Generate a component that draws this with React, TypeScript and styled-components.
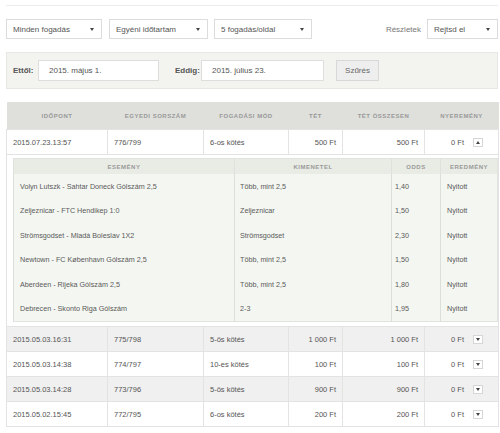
import styled, { createGlobalStyle } from "styled-components";

const GlobalStyle = createGlobalStyle`
  html, body {
    margin: 0;
    padding: 0;
    background: #ffffff;
  }
  body, table, button {
    font-family: "Liberation Sans", Arial, sans-serif;
    font-size: 8px;
    color: #555;
  }
`;

const Page = styled.div`
  width: 500px;
  padding: 0 2px 0 6px;
  box-sizing: border-box;
`;

const TopRule = styled.div`
  height: 5px;
  border-bottom: 1px solid #ececec;
`;

const SelectRow = styled.div`
  display: flex;
  align-items: center;
  margin-top: 13px;
  height: 20px;
`;

const Select = styled.div<{ $w: number; $gap?: number }>`
  width: ${(p) => p.$w}px;
  margin-right: ${(p) => p.$gap ?? 0}px;
  height: 20px;
  box-sizing: border-box;
  border: 1px solid #dcdcdc;
  background: #fff;
  display: flex;
  align-items: center;
  justify-content: space-between;
  padding: 0 7px 0 6px;
  color: #555;
`;

const Caret = styled.span<{ $up?: boolean }>`
  width: 0;
  height: 0;
  border-left: 2.5px solid transparent;
  border-right: 2.5px solid transparent;
  ${(p) =>
    p.$up ? "border-bottom: 3px solid #444;" : "border-top: 3px solid #444;"}
`;

const Spacer = styled.div`
  flex: 1;
`;

const Label = styled.span`
  color: #777;
  margin-right: 6px;
`;

const FilterPanel = styled.div`
  margin-top: 13px;
  height: 37px;
  box-sizing: border-box;
  background: #f3f4f0;
  border: 1px solid #e7e8e4;
  display: flex;
  align-items: center;
  padding-left: 6px;
`;

const FilterLabel = styled.span<{ $w: number }>`
  width: ${(p) => p.$w}px;
  font-weight: bold;
  color: #555;
`;

const DateInput = styled.div<{ $w: number; $gap: number }>`
  width: ${(p) => p.$w}px;
  margin-right: ${(p) => p.$gap}px;
  height: 21px;
  box-sizing: border-box;
  border: 1px solid #dedede;
  background: #fff;
  display: flex;
  align-items: center;
  padding-left: 10px;
  color: #555;
`;

const FilterButton = styled.button`
  width: 43px;
  height: 21px;
  box-sizing: border-box;
  border: 1px solid #d8d8d8;
  background: #eeeeee;
  color: #666;
  padding: 0;
`;

const Table = styled.table`
  margin-top: 13px;
  width: 492px;
  border-collapse: collapse;
  table-layout: fixed;
  font-size: 7.5px;
`;

const HeadCell = styled.th<{ $w: number }>`
  width: ${(p) => p.$w}px;
  height: 27px;
  background: #dfe0dc;
  color: #999;
  font-size: 6px;
  font-weight: bold;
  letter-spacing: 0.5px;
  text-align: center;
  padding: 0;
`;

const Row = styled.tr<{ $shade?: boolean }>`
  background: ${(p) => (p.$shade ? "#f0f0f0" : "#ffffff")};
`;

const Cell = styled.td<{ $right?: boolean; $pr?: number }>`
  height: 24px;
  border: 1px solid #e3e3e3;
  padding: 0 ${(p) => p.$pr ?? 6}px 0 6px;
  text-align: ${(p) => (p.$right ? "right" : "left")};
  color: #555;
  white-space: nowrap;
`;

const WinCell = styled.div`
  display: flex;
  align-items: center;
  justify-content: flex-end;
  gap: 9px;
`;

const Toggle = styled.span`
  width: 10px;
  height: 9px;
  box-sizing: border-box;
  border: 1px solid #d6d6d6;
  background: #fff;
  display: flex;
  align-items: center;
  justify-content: center;
`;

const DetailCell = styled.td`
  padding: 3px 6px 4px 6px;
  border: 1px solid #e3e3e3;
`;

const Detail = styled.table`
  width: 480px;
  border-collapse: collapse;
  table-layout: fixed;
  background: #f4f6f1;
  border: 1px solid #e1e3de;
  font-size: 7.2px;
`;

const DetailHead = styled.th<{ $w: number }>`
  width: ${(p) => p.$w}px;
  height: 15px;
  padding: 0;
  background: #e9ece5;
  color: #999;
  font-size: 6px;
  font-weight: bold;
  letter-spacing: 0.5px;
  text-align: center;
  border-left: 1px solid #dfe1dc;
`;

const DetailData = styled.td<{ $pl?: number }>`
  height: 24.5px;
  padding: 0 0 0 ${(p) => p.$pl ?? 6}px;
  border-left: 1px solid #dcdeda;
  color: #5a5a5a;
  white-space: nowrap;
`;

const events = [
  ["Volyn Lutszk - Sahtar Doneck Gólszám 2,5", "Több, mint 2,5", "1,40"],
  ["Zeljeznicar - FTC Hendikep 1:0", "Zeljeznicar", "1,50"],
  ["Strömsgodset - Mladá Boleslav 1X2", "Strömsgodset", "2,30"],
  ["Newtown - FC København Gólszám 2,5", "Több, mint 2,5", "1,50"],
  ["Aberdeen - Rijeka Gólszám 2,5", "Több, mint 2,5", "1,80"],
  ["Debrecen - Skonto Riga Gólszám", "2-3", "1,95"],
];

const bets = [
  ["2015.05.03.16:31", "775/798", "5-ös kötés", "1 000 Ft", "1 000 Ft"],
  ["2015.05.03.14:38", "774/797", "10-es kötés", "100 Ft", "100 Ft"],
  ["2015.05.03.14:28", "773/796", "5-ös kötés", "900 Ft", "900 Ft"],
  ["2015.05.02.15:45", "772/795", "6-os kötés", "200 Ft", "200 Ft"],
];

function App() {
  return (
    <Page>
      <GlobalStyle />
      <TopRule />
      <SelectRow>
        <Select $w={96} $gap={7}>
          Minden fogadás <Caret />
        </Select>
        <Select $w={99} $gap={6}>
          Egyéni időtartam <Caret />
        </Select>
        <Select $w={98}>
          5 fogadás/oldal <Caret />
        </Select>
        <Spacer />
        <Label>Részletek</Label>
        <Select $w={71}>
          Rejtsd el <Caret />
        </Select>
      </SelectRow>

      <FilterPanel>
        <FilterLabel $w={25}>Ettől:</FilterLabel>
        <DateInput $w={121} $gap={16}>
          2015. május 1.
        </DateInput>
        <FilterLabel $w={26}>Eddig:</FilterLabel>
        <DateInput $w={123} $gap={12}>
          2015. július 23.
        </DateInput>
        <FilterButton>Szűrés</FilterButton>
      </FilterPanel>

      <Table>
        <thead>
          <tr>
            <HeadCell $w={101}>IDŐPONT</HeadCell>
            <HeadCell $w={96}>EGYEDI SORSZÁM</HeadCell>
            <HeadCell $w={85}>FOGADÁSI MÓD</HeadCell>
            <HeadCell $w={54}>TÉT</HeadCell>
            <HeadCell $w={82}>TÉT ÖSSZESEN</HeadCell>
            <HeadCell $w={74}>NYEREMÉNY</HeadCell>
          </tr>
        </thead>
        <tbody>
          <Row>
            <Cell>2015.07.23.13:57</Cell>
            <Cell>776/799</Cell>
            <Cell>6-os kötés</Cell>
            <Cell $right>500 Ft</Cell>
            <Cell $right>500 Ft</Cell>
            <Cell $pr={15}>
              <WinCell>
                0 Ft
                <Toggle>
                  <Caret $up />
                </Toggle>
              </WinCell>
            </Cell>
          </Row>
          <tr>
            <DetailCell colSpan={6}>
              <Detail>
                <thead>
                  <tr>
                    <DetailHead $w={220}>ESEMÉNY</DetailHead>
                    <DetailHead $w={156}>KIMENETEL</DetailHead>
                    <DetailHead $w={48}>ODDS</DetailHead>
                    <DetailHead $w={56}>EREDMÉNY</DetailHead>
                  </tr>
                </thead>
                <tbody>
                  {events.map((e) => (
                    <tr key={e[0]}>
                      <DetailData>{e[0]}</DetailData>
                      <DetailData $pl={5}>{e[1]}</DetailData>
                      <DetailData $pl={3}>{e[2]}</DetailData>
                      <DetailData>Nyitott</DetailData>
                    </tr>
                  ))}
                </tbody>
              </Detail>
            </DetailCell>
          </tr>
          {bets.map((b, i) => (
            <Row key={b[1]} $shade={i % 2 === 0}>
              <Cell>{b[0]}</Cell>
              <Cell>{b[1]}</Cell>
              <Cell>{b[2]}</Cell>
              <Cell $right>{b[3]}</Cell>
              <Cell $right>{b[4]}</Cell>
              <Cell $pr={15}>
                <WinCell>
                  0 Ft
                  <Toggle>
                    <Caret />
                  </Toggle>
                </WinCell>
              </Cell>
            </Row>
          ))}
        </tbody>
      </Table>
    </Page>
  );
}

export default App;
